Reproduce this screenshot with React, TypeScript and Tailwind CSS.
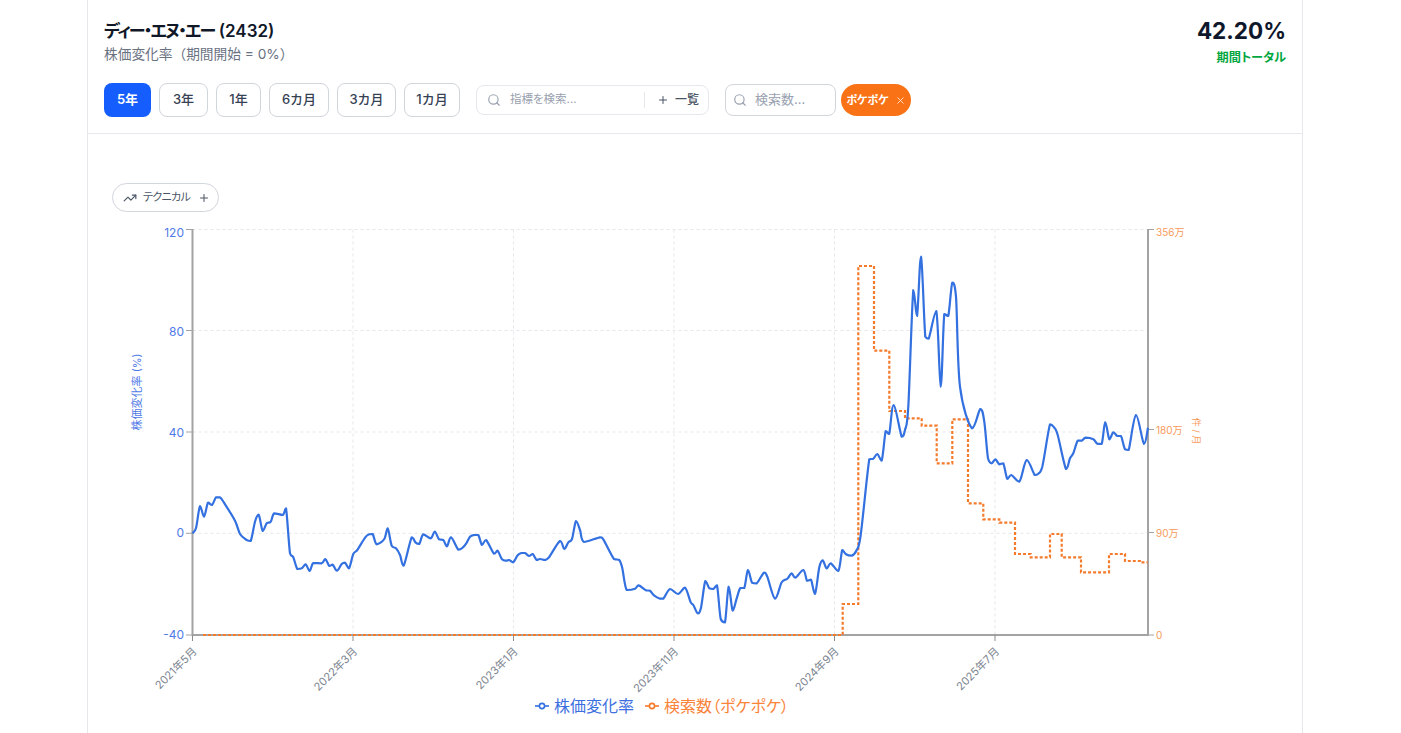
import { Plus, Search, TrendingUp, X } from 'lucide-react'

const FONT = "font-['Inter','Noto_Sans_CJK_JP',sans-serif]"

const periods = [
  { label: '5年', width: 'w-[47px]' },
  { label: '3年', width: 'w-[49px]' },
  { label: '1年', width: 'w-[45px]' },
  { label: '6カ月', width: 'w-[60px]' },
  { label: '3カ月', width: 'w-[59px]' },
  { label: '1カ月', width: 'w-[56px]' },
]

const stockPoints: [number, number][] = [
  [192.5, 533.3], [196, 528], [200, 506], [204, 516.7], [208, 502.7], [212, 505], [216, 497.3], [220, 497.3], [224, 502.7],
  [235, 520.7], [240, 534], [246.7, 540], [250.7, 541], [255, 521.7], [258.7, 514.7], [262.7, 531], [266.7, 523.3], [270.7, 521.7],
  [274.3, 513.3], [282.7, 515], [286, 508.3], [290, 553.3], [293.3, 557.3], [297.3, 569], [301.7, 568.3], [305.7, 564.3], [309.7, 571],
  [313.3, 563], [321.7, 563.3], [325.3, 559], [329.3, 566], [332.7, 564.7], [337, 570.7], [341.7, 564], [345, 562.7], [349, 568.3],
  [353.3, 554], [357.3, 550], [365.3, 537.3], [369.3, 534.3], [372.7, 534], [376.7, 544.3], [384.3, 539], [387.7, 528.3], [391.7, 545.7],
  [396, 548.3], [400, 555], [403.7, 565.7], [411.7, 537.3], [415.7, 542.7], [419.3, 544], [423.3, 534.3], [430.7, 538.3], [434.7, 531.7],
  [439, 539.3], [443.3, 540], [447, 546.3], [451, 537.3], [458.3, 549.7], [462.3, 548], [466.3, 543.3], [470, 536.7], [474.3, 535],
  [478.3, 535], [482, 545], [486, 540], [494, 553.7], [497.5, 550.7], [502, 559.3], [506, 560.7], [509.3, 560], [513.3, 562.3],
  [517.7, 555.3], [521.7, 553], [525, 553], [529, 556], [532.7, 554], [536.7, 560], [540, 559], [545, 560], [549, 557.3], [560, 541],
  [564.3, 549], [568.3, 542.3], [572, 539], [576, 521], [580, 530], [584, 542], [600, 537.3], [603.3, 539.3], [614, 559], [619.3, 560],
  [622.3, 568.3], [626.7, 590], [635, 588.7], [638.7, 585.3], [646, 590.3], [650, 590.7], [654.3, 595.7], [660, 598.7], [663.3, 598.7],
  [670, 589], [678, 594], [685, 587.7], [690.7, 602.3], [693.3, 605], [697.7, 613.3], [701, 607.7], [705.3, 581], [709.3, 588.3],
  [713.3, 589], [717, 585.3], [720.7, 619], [725, 622.3], [728.7, 586.7], [732.7, 610.7], [736.7, 598.3], [740.3, 588], [744.3, 588],
  [748, 570], [752, 582.7], [756.7, 583.3], [764, 572.7], [767.3, 576.7], [775, 598.7], [781.7, 582.3], [787.3, 578.7], [791.7, 573.3],
  [795.3, 577.7], [803.3, 570], [807, 580.7], [811, 579.7], [815, 594], [819.3, 567.3], [822.7, 560.4], [826.7, 568.5], [830.7, 563.3],
  [838.3, 571], [842.3, 550], [846, 554.3], [851.7, 555.7], [856.7, 550], [860.7, 535], [869.3, 459.3], [873.3, 458.7], [877.3, 454],
  [881.7, 460.7], [885.7, 431], [889.2, 434], [893.7, 405], [901.7, 436.7], [905, 430], [908.3, 406.7], [913.3, 290], [917, 316],
  [921, 256.7], [925.3, 336.7], [928.7, 338.7], [936.3, 311], [940.7, 386.7], [944.3, 314], [948.3, 316], [952.3, 282.7], [956, 296.7],
  [960, 386.7], [972, 428.3], [980.3, 409], [984.2, 421], [988, 458.3], [991.7, 463.3], [995.3, 459.3], [999.3, 464.3], [1003.3, 463.3],
  [1007.3, 479], [1011.3, 475], [1019.3, 481.7], [1026.7, 460], [1034.7, 475], [1038.3, 473.7], [1042.3, 466.7], [1050, 424.3],
  [1054, 427.3], [1057.7, 435], [1066, 469], [1070, 458.3], [1073.3, 453.3], [1077.7, 440.7], [1081.7, 440.7], [1085.7, 437.7],
  [1093.3, 439.3], [1097.3, 443.7], [1101.7, 444], [1105.3, 422.3], [1109.3, 439.3], [1113.3, 432.3], [1117.3, 436], [1121, 436],
  [1125, 449.3], [1128.7, 450], [1136, 415], [1144, 444], [1148, 427.7],
]

// step line, x then y
const searchSteps: [number, number][] = [
  [203, 635], [842.7, 635], [842.7, 604], [858.3, 604], [858.3, 266], [874, 266], [874, 350.7], [889.3, 350.7], [889.3, 411], [905, 411],
  [905, 418.3], [921.7, 418.3], [921.7, 425.7], [936.7, 425.7], [936.7, 463.3], [952.3, 463.3], [952.3, 419.3], [968, 419.3], [968, 503.3],
  [983.3, 503.3], [983.3, 519.3], [999.3, 519.3], [999.3, 522.7], [1015, 522.7], [1015, 554], [1030.7, 554], [1030.7, 557.3], [1050, 557.3],
  [1050, 534], [1061.7, 534], [1061.7, 557.3], [1081, 557.3], [1081, 572.3], [1109, 572.3], [1109, 554], [1125, 554], [1125, 561], [1140, 561],
  [1140, 562.3], [1147.7, 562.3],
]

function clamp(v: number, a: number, b: number) {
  return Math.min(Math.max(v, Math.min(a, b)), Math.max(a, b))
}

// catmull-rom, with control points held between the two ends so peaks don't overshoot
function smoothPath(pts: [number, number][]) {
  let d = `M${pts[0][0]},${pts[0][1]}`
  for (let i = 0; i < pts.length - 1; i++) {
    const p0 = pts[i - 1] ?? pts[i]
    const p1 = pts[i]
    const p2 = pts[i + 1]
    const p3 = pts[i + 2] ?? p2
    const c1x = p1[0] + (p2[0] - p0[0]) / 6
    const c1y = clamp(p1[1] + (p2[1] - p0[1]) / 6, p1[1], p2[1])
    const c2x = p2[0] - (p3[0] - p1[0]) / 6
    const c2y = clamp(p2[1] - (p3[1] - p1[1]) / 6, p1[1], p2[1])
    d += `C${c1x.toFixed(1)},${c1y.toFixed(1)} ${c2x.toFixed(1)},${c2y.toFixed(1)} ${p2[0]},${p2[1]}`
  }
  return d
}

const gridX = [353, 513.5, 674, 834.5, 995]
const gridY = [229.5, 330.5, 432, 533.3]
const leftTicks = [
  { y: 229.5, dy: 7, label: '120' },
  { y: 330.5, dy: 5, label: '80' },
  { y: 432, dy: 4.5, label: '40' },
  { y: 533.3, dy: 4, label: '0' },
  { y: 635, dy: 4, label: '-40' },
]
const rightTicks = [
  { y: 229.5, dy: 6, label: '356万' },
  { y: 429.5, dy: 4, label: '180万' },
  { y: 532.5, dy: 4, label: '90万' },
  { y: 635, dy: 4, label: '0' },
]
const xTicks = [
  { x: 192.5, label: '2021年5月' },
  { x: 353, label: '2022年3月' },
  { x: 513.5, label: '2023年1月' },
  { x: 674, label: '2023年11月' },
  { x: 834.5, label: '2024年9月' },
  { x: 995, label: '2025年7月' },
]

function Chart() {
  return (
    <svg viewBox="88 220 1214 475" className="block w-[1214px] h-[475px]">
      {gridY.map((y) => (
        <line key={y} x1="192.5" x2="1148" y1={y} y2={y} stroke="#e5e7eb" strokeDasharray="3 3" />
      ))}
      {gridX.map((x) => (
        <line key={x} x1={x} x2={x} y1="229.5" y2="635" stroke="#e5e7eb" strokeDasharray="3 3" />
      ))}

      <line x1="192.5" x2="192.5" y1="229" y2="636" stroke="#a3a3a3" strokeWidth="2" />
      <line x1="1148" x2="1148" y1="229" y2="636" stroke="#a3a3a3" strokeWidth="2" />
      <line x1="192" x2="1148" y1="635" y2="635" stroke="#a3a3a3" strokeWidth="2" />

      {leftTicks.map((t) => (
        <g key={t.y}>
          <line x1="186" x2="192" y1={t.y} y2={t.y} stroke="#a3a3a3" />
          <text x="184" y={t.y + t.dy} textAnchor="end" fontSize="12" fill="#4f7ae6">{t.label}</text>
        </g>
      ))}
      {rightTicks.map((t) => (
        <g key={t.y}>
          <line x1="1148" x2="1154" y1={t.y} y2={t.y} stroke="#a3a3a3" />
          <text x="1156" y={t.y + t.dy} fontSize="10" fill="#f79a5b">{t.label}</text>
        </g>
      ))}
      {xTicks.map((t) => (
        <g key={t.x}>
          <line x1={t.x} x2={t.x} y1="635" y2="641" stroke="#8c8c8c" />
          <text
            x={t.x + 5}
            y={652}
            textAnchor="end"
            fontSize="11"
            fill="#7d8590"
            transform={`rotate(-45 ${t.x + 5} 652)`}
          >
            {t.label}
          </text>
        </g>
      ))}

      <text x="0" y="0" fontSize="11" fill="#4f7ae6" textAnchor="middle" transform="translate(141 392) rotate(-90)">
        株価変化率 (%)
      </text>
      <text x="0" y="0" fontSize="9" fill="#f79a5b" textAnchor="middle" transform="translate(1193 431) rotate(90)">
        件 / 月
      </text>

      <path
        d={'M' + searchSteps.map((p) => p.join(',')).join('L')}
        fill="none"
        stroke="#f47b2c"
        strokeWidth="2.2"
        strokeDasharray="3 2"
      />
      <path d={smoothPath(stockPoints)} fill="none" stroke="#3370e0" strokeWidth="2.2" strokeLinejoin="round" />
    </svg>
  )
}

function LegendSwatch({ color }: { color: string }) {
  return (
    <svg width="14" height="14" viewBox="0 0 14 14" className="mr-[5px]">
      <line x1="0" x2="14" y1="7" y2="7" stroke={color} strokeWidth="1.6" />
      <circle cx="7" cy="7" r="2.6" fill="#fff" stroke={color} strokeWidth="1.6" />
    </svg>
  )
}

export default function App() {
  return (
    <div className={`h-[733px] overflow-hidden bg-white ${FONT}`}>
      <div className="ml-[87px] w-[1216px] h-[733px] border-x border-gray-200">
        <div className="h-[134px] border-b border-gray-200 px-4 pt-[19px]">
          <div className="flex justify-between">
            <div>
              <h1 className="text-[17px] leading-[24px] font-semibold text-gray-900 [font-feature-settings:'palt']">
                <span className="tracking-[-1.7px]">ディー・エヌ・エー</span> (2432)
              </h1>
              <p className="mt-px text-[13.7px] leading-[20px] text-gray-500">株価変化率（期間開始 = 0%）</p>
            </div>
            <div className="text-right">
              <div className="text-[22.5px] leading-[24px] font-bold text-slate-900">42.20%</div>
              <div className="mt-[5px] text-[12.2px] leading-[20px] font-semibold text-green-600 [font-feature-settings:'palt']">
                期間トータル
              </div>
            </div>
          </div>

          <div className="mt-[15px] flex items-center">
            <div className="flex gap-2">
              {periods.map((p, i) => (
                <button
                  key={p.label}
                  className={
                    i === 0
                      ? `h-[34px] ${p.width} rounded-lg bg-blue-600 text-[13px] font-semibold text-white`
                      : `h-[34px] ${p.width} rounded-lg border border-gray-300 bg-white text-[13px] font-medium text-gray-700`
                  }
                >
                  {p.label}
                </button>
              ))}
            </div>

            <div className="ml-4 flex h-[30px] w-[233px] items-center rounded-lg border border-gray-200 pl-[10px] pr-[9px]">
              <Search size={14} className="text-gray-400" />
              <span className="ml-[9px] text-[11.5px] text-gray-400 [font-feature-settings:'palt']">指標を検索...</span>
              <div className="ml-auto flex items-center">
                <div className="mr-[12px] h-[16px] w-px bg-gray-200" />
                <div className="flex items-center gap-[6px] text-xs font-medium text-gray-600">
                  <Plus size={12} />
                  一覧
                </div>
              </div>
            </div>

            <div className="ml-4 flex h-[32px] w-[111px] items-center rounded-lg border border-gray-300 pl-[7px]">
              <Search size={14} className="text-gray-400" />
              <span className="ml-[8px] text-[13px] text-gray-400">検索数...</span>
            </div>

            <div className="ml-[5px] flex h-[32px] w-[70px] items-center justify-center gap-[6px] rounded-full bg-[#f97316] text-[11px] font-semibold text-white">
              <span className="[font-feature-settings:'palt']">ポケポケ</span>
              <X size={11} className="opacity-80" />
            </div>
          </div>
        </div>

        <div className="pt-[49px]">
          <div className="ml-[24px] flex h-[29px] w-[107px] items-center rounded-full border border-gray-300 pl-[10px] text-[11px] tracking-[-0.7px] text-gray-600">
            <TrendingUp size={14} />
            <span className="ml-[6px] [font-feature-settings:'palt']">テクニカル</span>
            <Plus size={12} className="ml-[8px]" />
          </div>
          <div className="mt-[8px]">
            <Chart />
          </div>
          <div className="flex h-[22px] items-center justify-center pr-[66px] text-[16px] [font-feature-settings:'palt']">
            <div className="flex items-center text-[#3b6fe0]">
              <LegendSwatch color="#3370e0" />
              株価変化率
            </div>
            <div className="ml-[11px] flex items-center text-[#f9843a]">
              <LegendSwatch color="#f47b2c" />
              検索数（ポケポケ）
            </div>
          </div>
        </div>
      </div>
    </div>
  )
}
